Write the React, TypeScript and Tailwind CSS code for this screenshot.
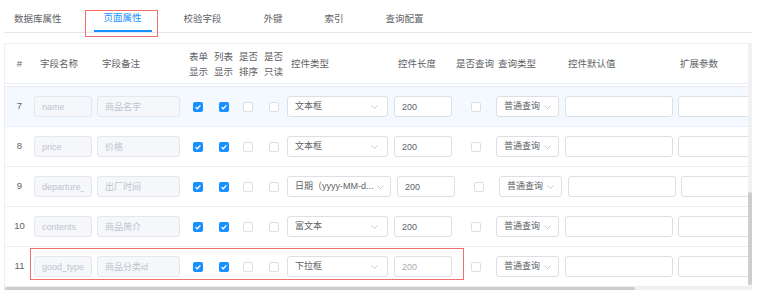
import React from "react";

type Row = {
  no: number;
  name: string;
  remark: string;
  control: string;
  wide?: boolean;
  hover?: boolean;
  faint?: boolean;
};

const rows: Row[] = [
  { no: 7, name: "name", remark: "商品名字", control: "文本框", hover: true },
  { no: 8, name: "price", remark: "价格", control: "文本框" },
  { no: 9, name: "departure_time", remark: "出厂时间", control: "日期（yyyy-MM-d...", wide: true },
  { no: 10, name: "contents", remark: "商品简介", control: "富文本" },
  { no: 11, name: "good_type", remark: "商品分类id", control: "下拉框", faint: true },
];

const tabs = ["数据库属性", "页面属性", "校验字段", "外键", "索引", "查询配置"];

function Check(props: { on?: boolean }) {
  if (props.on) {
    return (
      <span className="flex h-[10px] w-[10px] items-center justify-center rounded-[2px] bg-[#1890ff]">
        <svg width="8" height="8" viewBox="0 0 8 8">
          <path d="M1.6 4.2 L3.3 5.8 L6.4 2.4" fill="none" stroke="#fff" strokeWidth="1.3" />
        </svg>
      </span>
    );
  }
  return <span className="block h-[10px] w-[10px] rounded-[2px] border border-[#dcdfe6] bg-white" />;
}

function Chevron() {
  return (
    <svg width="7" height="4" viewBox="0 0 7 4" className="shrink-0">
      <polyline points="0.5,0.5 3.5,3.5 6.5,0.5" fill="none" stroke="#c0c4cc" strokeWidth="0.9" />
    </svg>
  );
}

function Select(props: { text: string; width: string; pr: string; gap: string }) {
  return (
    <div className={`flex h-[21px] items-center rounded-[3px] border border-[#dcdfe6] bg-white pl-[7px] text-[9px] ${props.gap} ${props.width} ${props.pr}`}>
      <span className="flex-1 whitespace-nowrap text-[#606266]">{props.text}</span>
      <Chevron />
    </div>
  );
}

function Field(props: { value?: string; width: string; disabled?: boolean; faint?: boolean }) {
  const look = props.disabled
    ? "bg-[#f5f7fa] border-[#e4e7ed] text-[#c0c4cc]"
    : props.faint
    ? "bg-white border-[#dcdfe6] text-[#a8abb2]"
    : "bg-white border-[#dcdfe6] text-[#606266]";
  return (
    <input
      readOnly
      value={props.value ?? ""}
      className={`h-[21px] shrink-0 rounded-[3px] border px-[7px] text-[9px] outline-none ${look} ${props.width}`}
    />
  );
}

function TableRow({ row }: { row: Row }) {
  return (
    <div className={`flex h-[40px] shrink-0 items-center border-b border-[#ebeef5] ${row.hover ? "bg-[#f4f9ff]" : "bg-white"}`}>
      <div className="w-[29px] shrink-0 text-center">{row.no}</div>
      <div className="w-[63px] shrink-0">
        <Field value={row.name} width="w-[58px]" disabled />
      </div>
      <div className="w-[92px] shrink-0">
        <Field value={row.remark} width="w-[83px]" disabled />
      </div>
      <div className="w-[25px] shrink-0 pl-[4px]"><Check on /></div>
      <div className="w-[25px] shrink-0 pl-[5px]"><Check on /></div>
      <div className="w-[25px] shrink-0 pl-[4px]"><Check /></div>
      <div className="w-[23px] shrink-0 pl-[5px]"><Check /></div>
      <div className={`shrink-0 ${row.wide ? "w-[110px]" : "w-[107px]"}`}>
        <Select
          text={row.control}
          width={row.wide ? "w-[104px]" : "w-[101px]"}
          pr={row.wide ? "pr-[6px]" : "pr-[9px]"}
          gap="gap-[3px]"
        />
      </div>
      <div className="w-[62px] shrink-0">
        <Field value="200" width="w-[58px]" faint={row.faint} />
      </div>
      <div className="w-[40px] shrink-0 pl-[15px]"><Check /></div>
      <div className="w-[69px] shrink-0">
        <Select text="普通查询" width="w-[63px]" pr="pr-[7px]" gap="gap-[4px]" />
      </div>
      <div className="w-[113px] shrink-0">
        <Field width="w-[108px]" />
      </div>
      <div className="w-[120px] shrink-0">
        <Field width="w-[110px]" />
      </div>
    </div>
  );
}

export default function App() {
  return (
    <div className="relative h-[292px] w-[762px] overflow-hidden bg-white font-['Liberation_Sans','Noto_Sans_CJK_SC',sans-serif] text-[9.5px] text-[#606266]">
      {/* tabs */}
      <div className="mx-[4px] flex h-[33px] w-[748px] gap-[22px] border-b border-[#e4e7ed]">
        {tabs.map((t, i) => (
          <div
            key={t}
            className={`flex h-[32px] items-center px-[10px] pt-[6px] ${
              i === 1 ? "border-b-2 border-[#1890ff] text-[#1890ff]" : "text-[#606266]"
            }`}
          >
            {t}
          </div>
        ))}
      </div>

      {/* table */}
      <div className="ml-[4px] mt-[10px] flex h-[247px] w-[748px]">
        <div className="flex w-[744px] flex-col overflow-hidden border-l border-t border-[#ebeef5]">
          <div className="flex h-[40px] shrink-0 items-center border-b border-[#ebeef5] leading-[15px]">
            <div className="w-[29px] shrink-0 text-center">#</div>
            <div className="w-[63px] shrink-0 pl-[6px]">字段名称</div>
            <div className="w-[92px] shrink-0 pl-[5px]">字段备注</div>
            <div className="w-[25px] shrink-0">表单<br />显示</div>
            <div className="w-[25px] shrink-0">列表<br />显示</div>
            <div className="w-[25px] shrink-0">是否<br />排序</div>
            <div className="w-[23px] shrink-0">是否<br />只读</div>
            <div className="w-[107px] shrink-0 pl-[4px]">控件类型</div>
            <div className="w-[62px] shrink-0 pl-[4px]">控件长度</div>
            <div className="w-[40px] shrink-0 whitespace-nowrap">是否查询</div>
            <div className="w-[69px] shrink-0 pl-[2px]">查询类型</div>
            <div className="w-[113px] shrink-0 pl-[3px]">控件默认值</div>
            <div className="w-[70px] shrink-0 pl-[2px]">扩展参数</div>
          </div>
          <div className="h-[3px] shrink-0 border-b border-[#ebeef5]" />
          {rows.map((r) => (
            <TableRow key={r.no} row={r} />
          ))}
          <div className="mt-auto flex h-[4px] shrink-0 bg-[#f1f1f1]">
            <div className="h-full w-[630px] rounded-[2px] bg-[#cdcdcd]" />
          </div>
        </div>
        <div className="flex w-[4px] flex-col justify-end bg-[#f1f1f1] pb-[5px]">
          <div className="h-[93px] w-full rounded-[2px] bg-[#cdcdcd]" />
        </div>
      </div>

      {/* annotation boxes */}
      <div className="absolute left-[85px] top-[10px] h-[27px] w-[73px] border border-[#f07070]" />
      <div className="absolute left-[30px] top-[248px] h-[32px] w-[434px] border border-[#f07070]" />
    </div>
  );
}
